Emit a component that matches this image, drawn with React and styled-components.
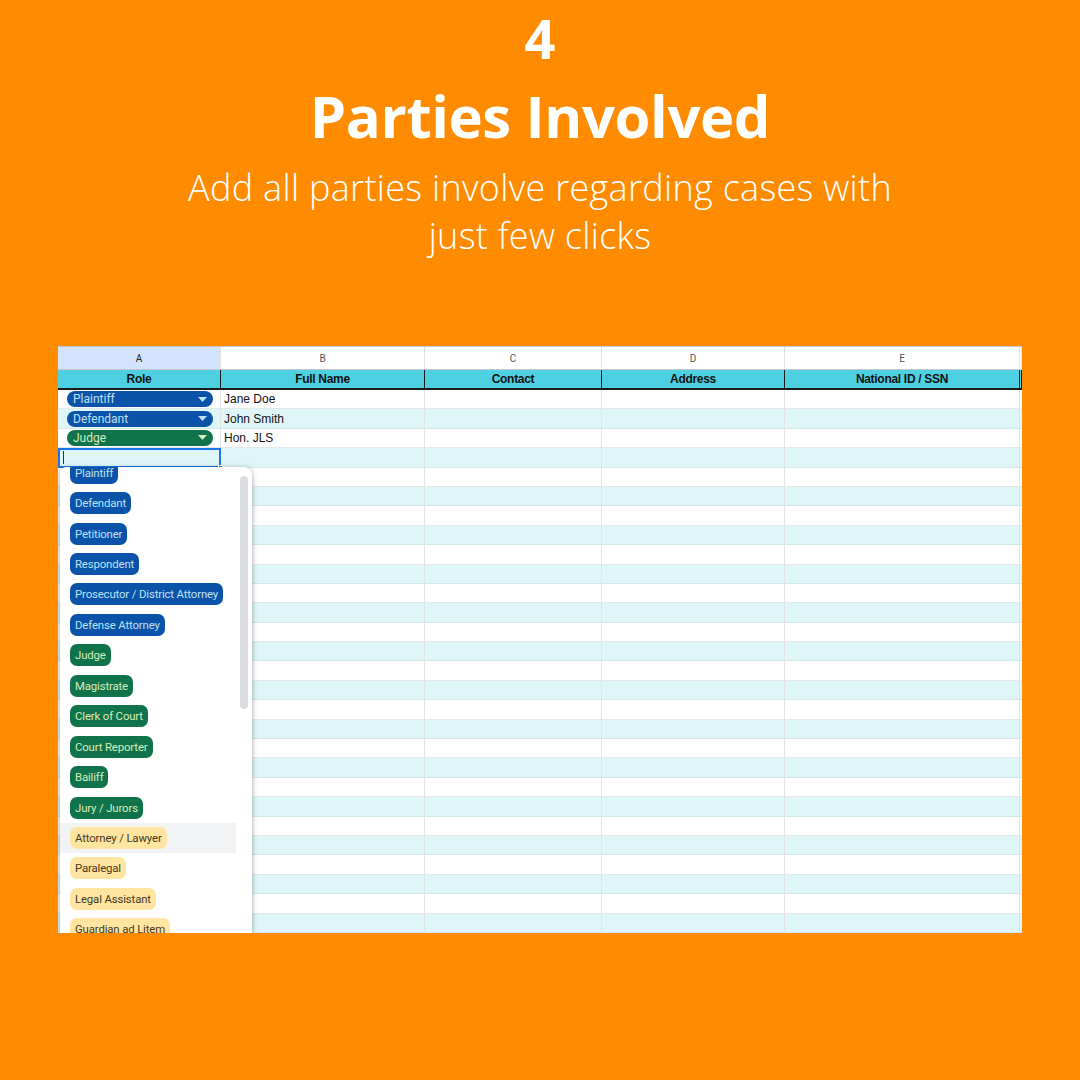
import React from "react";
import styled, { createGlobalStyle } from "styled-components";

const GlobalStyle = createGlobalStyle`
  html, body { margin: 0; padding: 0; }
  body { background: #ff8c00; font-family: "Open Sans", "Liberation Sans", sans-serif; }
  * { box-sizing: border-box; }
`;

const Page = styled.div`
  width: 1080px;
  height: 1080px;
  background: #ff8c00;
  display: flex;
  flex-direction: column;
  align-items: center;
  overflow: hidden;
`;

const StepNumber = styled.div`
  margin-top: 6px;
  font-family: "Open Sans", sans-serif;
  font-weight: 700;
  font-size: 54px;
  line-height: 64px;
  color: #fff;
`;

const Title = styled.h1`
  margin: 10px 0 0;
  font-family: "Open Sans", sans-serif;
  font-weight: 700;
  font-size: 58px;
  line-height: 72px;
  letter-spacing: -0.4px;
  color: #fff;
`;

const Subtitle = styled.p`
  margin: 12px 0 0;
  text-align: center;
  font-family: "Open Sans", sans-serif;
  font-weight: 300;
  font-size: 36px;
  line-height: 48px;
  letter-spacing: 0.3px;
  color: #fff;
`;

const Sheet = styled.div`
  position: relative;
  align-self: flex-start;
  margin-left: 58px;
  margin-top: 86px;
  width: 964px;
  height: 587px;
  background: #fff;
  border-top: 1px solid #c4c7c5;
  display: grid;
  grid-template-columns: 163px 204px 177px 183px 235px 2px;
  grid-template-rows: 23px 20px repeat(28, 1fr);
  overflow: hidden;
  font-family: "Liberation Sans", Arial, sans-serif;
`;

const ColLetter = styled.div`
  background: ${(p) => (p.$active ? "#d3e3fd" : "#fff")};
  border-right: 1px solid #e1e1e1;
  border-bottom: 1px solid #c7c7c7;
  display: flex;
  align-items: center;
  justify-content: center;
  font-family: "Roboto", sans-serif;
  font-size: 10px;
  color: ${(p) => (p.$active ? "#222" : "#555")};
`;

const HeadCell = styled.div`
  background: #4dd0e1;
  border-right: 1px solid #1b1b1b;
  border-bottom: 2px solid #1b1b1b;
  display: flex;
  align-items: center;
  justify-content: center;
  font-weight: 700;
  font-size: 12px;
  color: #111;
  letter-spacing: -0.3px;
`;

const Cell = styled.div`
  position: relative;
  background: ${(p) => (p.$alt ? "#dff6f9" : "#fff")};
  border-right: 1px solid #e3e3e3;
  border-bottom: 1px solid ${(p) => (p.$alt ? "#d3e6ea" : "#e4e8e9")};
  display: flex;
  align-items: center;
  padding: 0 ${(p) => (p.$flush ? "0" : "3px")};
  font-size: 12px;
  color: #111;
  white-space: nowrap;
`;

const SelectedCell = styled(Cell)`
  border: 2px solid #1a73e8;
  z-index: 2;
`;

const TextCursor = styled.span`
  width: 1px;
  height: 13px;
  background: #333;
`;

const FillHandle = styled.span`
  position: absolute;
  right: -4px;
  bottom: -4px;
  width: 5px;
  height: 5px;
  background: #1a73e8;
  border: 1px solid #fff;
`;

const palette = {
  blue: { bg: "#0a53a8", fg: "#bfe1f6" },
  green: { bg: "#11734b", fg: "#d4edbc" },
  yellow: { bg: "#ffe5a0", fg: "#473821" },
};

const CellChip = styled.div`
  flex: 1;
  margin: 0 7px 0 9px;
  height: 16px;
  border-radius: 8px;
  background: ${(p) => palette[p.$tone].bg};
  color: ${(p) => palette[p.$tone].fg};
  display: flex;
  align-items: center;
  justify-content: space-between;
  padding: 0 6px 0 6px;
  font-family: "Roboto", sans-serif;
  font-size: 12px;
`;

const Menu = styled.div`
  position: absolute;
  left: 2px;
  top: 120px;
  width: 192px;
  bottom: 0;
  background: #fff;
  border-radius: 6px 8px 0 0;
  box-shadow: 0 1px 4px rgba(0, 0, 0, 0.28), 0 2px 8px rgba(0, 0, 0, 0.12);
  overflow: hidden;
  z-index: 5;
`;

const MenuList = styled.div`
  margin-top: -9.5px;
  margin-right: 16px;
  display: flex;
  flex-direction: column;
`;

const MenuItem = styled.div`
  height: 30.45px;
  display: flex;
  align-items: center;
  padding-left: 10px;
  background: ${(p) => (p.$hover ? "#f1f3f4" : "transparent")};
`;

const MenuChip = styled.span`
  height: 22px;
  border-radius: 7px;
  padding: 0 5px;
  display: inline-flex;
  align-items: center;
  background: ${(p) => palette[p.$tone].bg};
  color: ${(p) => palette[p.$tone].fg};
  font-family: "Roboto", sans-serif;
  font-size: 11.4px;
  letter-spacing: -0.15px;
  white-space: nowrap;
`;

const ScrollThumb = styled.div`
  position: absolute;
  right: 4px;
  top: 9px;
  width: 8px;
  height: 233px;
  border-radius: 4px;
  background: #dadce0;
`;

const Caret = ({ color }) => (
  <svg width="9" height="5" viewBox="0 0 9 5">
    <polygon points="0,0 9,0 4.5,5" fill={color} />
  </svg>
);

const letters = ["A", "B", "C", "D", "E", ""];
const headers = ["Role", "Full Name", "Contact", "Address", "National ID / SSN", ""];

const filled = [
  { role: "Plaintiff", tone: "blue", name: "Jane Doe" },
  { role: "Defendant", tone: "blue", name: "John Smith" },
  { role: "Judge", tone: "green", name: "Hon. JLS" },
];

const options = [
  ["Plaintiff", "blue"],
  ["Defendant", "blue"],
  ["Petitioner", "blue"],
  ["Respondent", "blue"],
  ["Prosecutor / District Attorney", "blue"],
  ["Defense Attorney", "blue"],
  ["Judge", "green"],
  ["Magistrate", "green"],
  ["Clerk of Court", "green"],
  ["Court Reporter", "green"],
  ["Bailiff", "green"],
  ["Jury / Jurors", "green"],
  ["Attorney / Lawyer", "yellow"],
  ["Paralegal", "yellow"],
  ["Legal Assistant", "yellow"],
  ["Guardian ad Litem", "yellow"],
];

const ROWS = 28;

export default function App() {
  const rows = [];
  for (let r = 0; r < ROWS; r++) {
    const alt = r % 2 === 1;
    const data = filled[r];
    for (let c = 0; c < 6; c++) {
      const key = `${r}-${c}`;
      if (r === 3 && c === 0) {
        rows.push(
          <SelectedCell key={key} $alt={alt}>
            <TextCursor />
            <FillHandle />
          </SelectedCell>
        );
        continue;
      }
      let content = null;
      if (data && c === 0) {
        content = (
          <CellChip $tone={data.tone}>
            <span>{data.role}</span>
            <Caret color={palette[data.tone].fg} />
          </CellChip>
        );
      } else if (data && c === 1) {
        content = data.name;
      }
      rows.push(
        <Cell key={key} $alt={alt} $flush={c === 0 && !!data}>
          {content}
        </Cell>
      );
    }
  }

  return (
    <>
      <GlobalStyle />
      <Page>
        <StepNumber>4</StepNumber>
        <Title>Parties Involved</Title>
        <Subtitle>
          Add all parties involve regarding cases with
          <br />
          just few clicks
        </Subtitle>
        <Sheet>
          {letters.map((l, i) => (
            <ColLetter key={"l" + i} $active={i === 0}>{l}</ColLetter>
          ))}
          {headers.map((h, i) => (
            <HeadCell key={"h" + i}>{h}</HeadCell>
          ))}
          {rows}
          <Menu>
            <MenuList>
              {options.map(([label, tone], i) => (
                <MenuItem key={label} $hover={i === 12}>
                  <MenuChip $tone={tone}>{label}</MenuChip>
                </MenuItem>
              ))}
            </MenuList>
            <ScrollThumb />
          </Menu>
        </Sheet>
      </Page>
    </>
  );
}
